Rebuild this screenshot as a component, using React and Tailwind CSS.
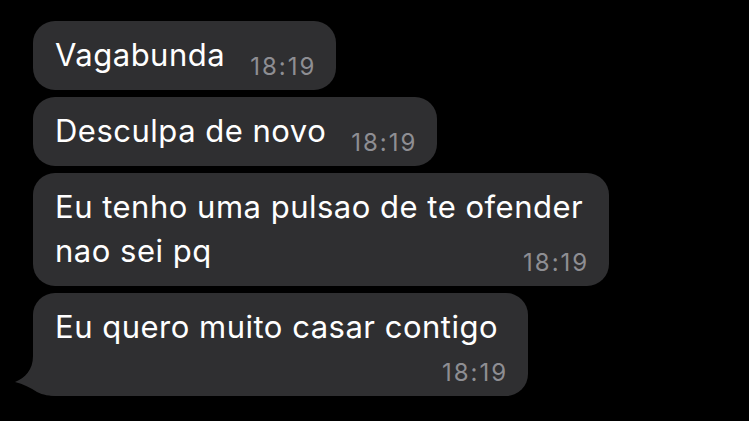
import React from 'react';

const messages = [
    { lines: ['Vagabunda'], time: '18:19', inline: true },
    { lines: ['Desculpa de novo'], time: '18:19', inline: true },
    { lines: ['Eu tenho uma pulsao de te ofender', 'nao sei pq'], time: '18:19', inline: true, wide: 'pr-[6px]' },
    { lines: ['Eu quero muito casar contigo'], time: '18:19', inline: false, tail: true },
];

function Time({ value }) {
    return (
        <span className="text-[24px] leading-[20px] tracking-[2px] text-[#8e8e93] whitespace-nowrap">
            {value}
        </span>
    );
}

function Tail() {
    return (
        <svg
            className="absolute left-[-20px] bottom-0"
            width="46"
            height="40"
            viewBox="0 0 46 40"
        >
            <path
                d="M20 0 C20 14 12 22 2 26 C10 28 18 32 24 36 C30 39 36 40 46 40 L46 0 Z"
                fill="#2f2f31"
            />
        </svg>
    );
}

function Bubble({ message }) {
    const body = message.lines.slice(0, -1);
    const last = message.lines[message.lines.length - 1];

    return (
        <div className="relative bg-[#2f2f31] rounded-[22px] pl-[22px] pr-[20px] pt-[12px] pb-[13px] text-white text-[31px] leading-[44px] tracking-[0.5px]">
            {body.map((line) => (
                <div key={line} className={`whitespace-nowrap ${message.wide || ''}`}>{line}</div>
            ))}
            {message.inline ? (
                <div className="flex items-end justify-between gap-[25px]">
                    <span className="whitespace-nowrap">{last}</span>
                    <Time value={message.time} />
                </div>
            ) : (
                <>
                    <div className="whitespace-nowrap pr-[10px]">{last}</div>
                    <div className="flex justify-end mt-[14px]">
                        <Time value={message.time} />
                    </div>
                </>
            )}
            {message.tail && <Tail />}
        </div>
    );
}

export default function App() {
    return (
        <div
            className="w-[749px] h-[421px] overflow-hidden bg-black pt-[21px] pl-[33px] flex flex-col items-start gap-[7px]"
            style={{ fontFamily: 'Inter, "Noto Sans", sans-serif' }}
        >
            {messages.map((m, i) => (
                <Bubble key={i} message={m} />
            ))}
        </div>
    );
}
